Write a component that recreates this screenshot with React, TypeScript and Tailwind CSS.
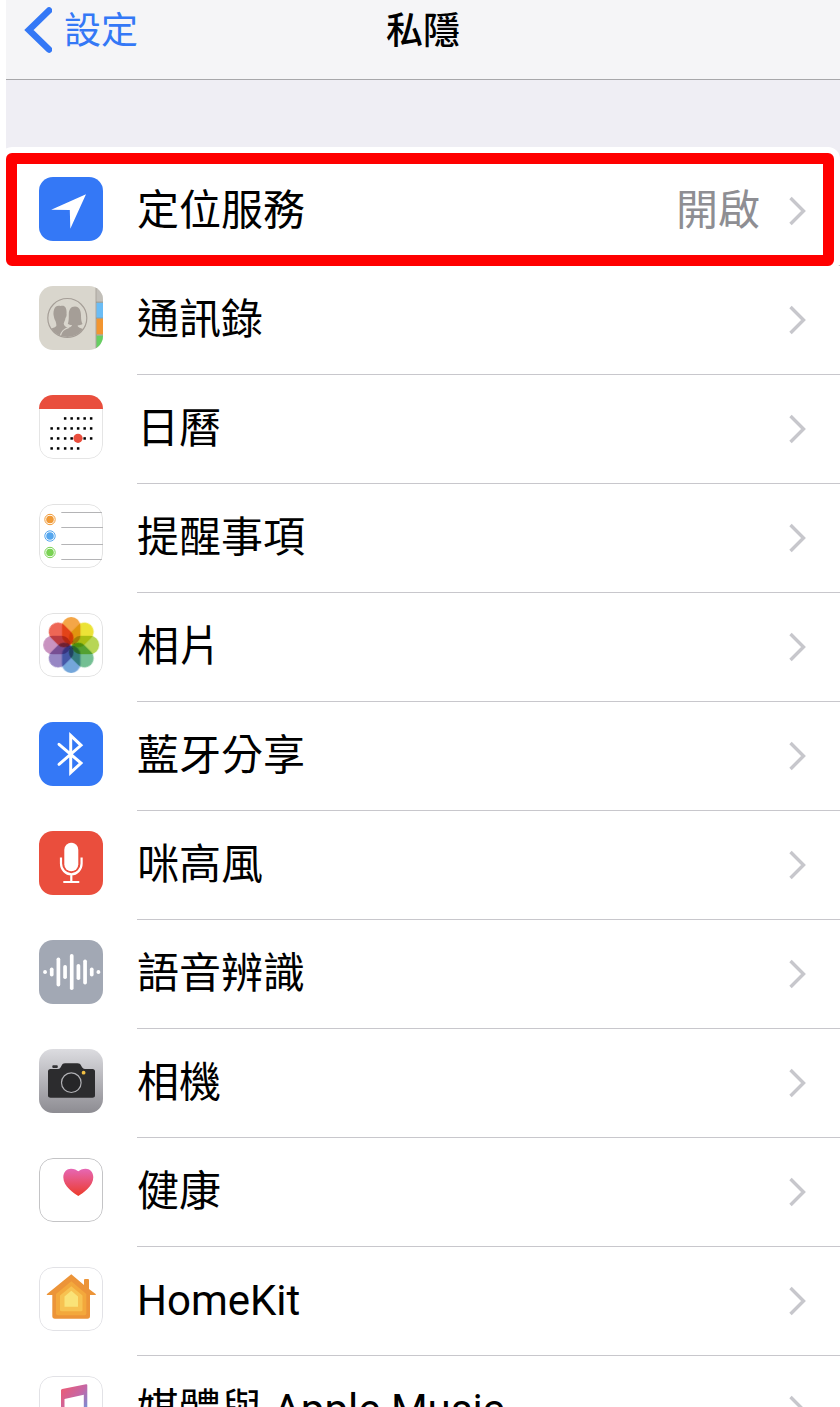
import type { ReactNode } from 'react';

interface PrivacyItem {
  id: string;
  label: string;
  value?: string;
  icon: ReactNode;
  highlighted?: boolean;
}

const petals = ['#f4a647', '#ece336', '#b7d655', '#74bf93', '#74a6da', '#9787c4', '#c993c0', '#ee6655'];

const calendarDots = [
  { y: 23, xs: [26, 32.5, 39, 45.5, 52] },
  { y: 33, xs: [12.5, 19, 26, 32.5, 39, 45.5, 52] },
  { y: 43, xs: [12.5, 19, 26, 32.5, 45.5, 52] },
  { y: 53, xs: [12.5, 19, 26, 32.5, 39] },
];

const reminders = [
  { y: 15.5, color: '#f09a37' },
  { y: 32, color: '#55a6ee' },
  { y: 48.5, color: '#7ad254' },
];

const waveBars = [2, 4.5, 14.5, 7, 18, 8, 12.5, 4.5, 2];

function IconTile({ children, outline }: { children: ReactNode; outline?: string }) {
  return (
    <svg viewBox="0 0 64 64" className="mb-1.5 size-16 shrink-0 overflow-hidden rounded-[14px]" aria-hidden="true">
      <rect width="64" height="64" fill="#fff" />
      {outline && <rect x="0.5" y="0.5" width="63" height="63" rx="13.5" fill="none" stroke={outline} />}
      {children}
    </svg>
  );
}

const items: PrivacyItem[] = [
  {
    id: 'location',
    label: '定位服務',
    value: '開啟',
    highlighted: true,
    icon: (
      <IconTile>
        <rect width="64" height="64" fill="#3478f6" />
        <path d="M47 17.3 12.2 32.7 30.8 33 31.3 51.8Z" fill="#fff" />
      </IconTile>
    ),
  },
  {
    id: 'contacts',
    label: '通訊錄',
    icon: (
      <IconTile>
        <rect width="64" height="64" fill="#d9d6cd" />
        <rect x="57" width="7" height="16" fill="#c2bfb9" />
        <rect x="57" y="16.5" width="7" height="15.5" fill="#6abcf5" />
        <rect x="57" y="32.5" width="7" height="16" fill="#f29530" />
        <rect x="57" y="49.5" width="7" height="15" fill="#66cf62" />
        <path d="M57 0V64" stroke="#aaa69e" strokeWidth="1" />
        <path d="M57 16.2H64M57 32.2H64M57 49H64" stroke="#8c8a80" strokeWidth="0.8" />
        <clipPath id="contacts-circle">
          <circle cx="28.3" cy="32" r="19" />
        </clipPath>
        <g clipPath="url(#contacts-circle)">
          <path d="M36 20.5C40.500 20.500 42 25 42 29.500 42 34 42.500 36 43.500 38 41.500 39.300 38.500 39.300 38.500 39.800 38.500 41 41 42 44 43 47 44 49 46 49 52H20C20 45 23 43.500 27 42.500 31 41.500 33 40.500 33 39 31 39 30 38.500 28.800 38 29.800 35 29.800 32 29.800 28.500 29.800 24 31.500 20.500 36 20.500Z" fill="#a59e97" />
          <path d="M21.500 20C26 18.500 28 22 27.500 27.500 27.800 28.500 27.500 31 26.500 32 26 35 25 36 24.700 37.500 24.700 40 27 41 29 42 24 43.500 21.500 46 21 52H6V45C9 43 15.500 42.500 17.300 40 17.500 38 17 36.500 16.500 35 15.500 33 15 32 14.800 30 14 28 14.500 22 17 20.500 18.500 19.500 20 19.500 21.500 20Z" fill="#a59e97" />
          <path d="M30 41.500C24 43 21.500 46 21 52" fill="none" stroke="#d9d6cd" strokeWidth="1.2" />
        </g>
        <circle cx="28.3" cy="32" r="19.5" fill="none" stroke="#a59e97" strokeWidth="1.2" />
      </IconTile>
    ),
  },
  {
    id: 'calendar',
    label: '日曆',
    icon: (
      <IconTile outline="#e5e5e5">
        {calendarDots.map((row) =>
          row.xs.map((x) => <rect key={`${x}-${row.y}`} x={x - 1.1} y={row.y - 0.8} width="2.5" height="2.5" fill="#000" />)
        )}
        <circle cx="39" cy="43.3" r="4.6" fill="#e94e3d" />
        <rect width="64" height="14" fill="#e94e3d" />
      </IconTile>
    ),
  },
  {
    id: 'reminders',
    label: '提醒事項',
    icon: (
      <IconTile outline="#e2e2e2">
        {reminders.map((dot) => (
          <g key={dot.color}>
            <circle cx="11" cy={dot.y} r="5.2" fill="none" stroke={dot.color} strokeWidth="1" />
            <circle cx="11" cy={dot.y} r="3.8" fill={dot.color} />
          </g>
        ))}
        <path d="M22.300 8.500H63M22.300 23.500H64M22.300 40.500H64M22.300 55.500H63" stroke="#b4b4b6" strokeWidth="1" />
      </IconTile>
    ),
  },
  {
    id: 'photos',
    label: '相片',
    icon: (
      <IconTile outline="#e2e2e2">
        <g transform="translate(32.2 32)">
          {petals.map((color, i) => (
            <rect
              key={color}
              x="-9.200"
              y="-28"
              width="18.400"
              height="27.500"
              rx="9"
              fill={color}
              transform={`rotate(${i * 45})`}
              className="mix-blend-multiply"
            />
          ))}
        </g>
      </IconTile>
    ),
  },
  {
    id: 'bluetooth',
    label: '藍牙分享',
    icon: (
      <IconTile>
        <rect width="64" height="64" fill="#3478f6" />
        <path d="M20 22.300 42 41 31.700 50.500V13.500L42 23.300 20 42.300" fill="none" stroke="#fff" strokeWidth="3" strokeLinecap="round" />
      </IconTile>
    ),
  },
  {
    id: 'microphone',
    label: '咪高風',
    icon: (
      <IconTile>
        <rect width="64" height="64" fill="#ea4e3d" />
        <rect x="25.3" y="11.8" width="14" height="28.500" rx="7" fill="#fff" />
        <path d="M22 26.500V32.500A10.300 10.800 0 0 0 42.600 32.500V26.500M32.300 43.500V51M24.300 51H40.300" fill="none" stroke="#fff" strokeWidth="2.2" />
      </IconTile>
    ),
  },
  {
    id: 'speech',
    label: '語音辨識',
    icon: (
      <IconTile>
        <rect width="64" height="64" fill="#a2a8b4" />
        {waveBars.map((half, i) => (
          <rect key={i} x={4.2 + i * 6.67} y={32 - half} width="3.7" height={half * 2} rx="1.8" fill="#fff" />
        ))}
      </IconTile>
    ),
  },
  {
    id: 'camera',
    label: '相機',
    icon: (
      <IconTile>
        <linearGradient id="camera-bg" x1="0" y1="0" x2="0" y2="1">
          <stop offset="0" stopColor="#dcdce0" />
          <stop offset="1" stopColor="#8d8c92" />
        </linearGradient>
        <rect width="64" height="64" fill="url(#camera-bg)" />
        <rect x="13.300" y="16.300" width="5.500" height="2.600" rx="1" fill="#333336" />
        <path d="M11.500 20H19C21 20 21.500 18.500 22.500 16.800 23.500 15 24.200 14.300 26 14.300H38.500C40.500 14.300 41.200 15 42.200 16.800 43.200 18.500 44 20 46 20H53.500A2.500 2.500 0 0 1 56 22.500V46A2.500 2.500 0 0 1 53.500 48.700H11.500A2.500 2.500 0 0 1 9 46V22.500A2.500 2.500 0 0 1 11.500 20Z" fill="#2c2c2e" />
        <circle cx="32.300" cy="33.700" r="9.800" fill="#262628" stroke="#b0b0b4" strokeWidth="1.200" />
        <circle cx="44.600" cy="23.700" r="1.900" fill="#f2c044" />
      </IconTile>
    ),
  },
  {
    id: 'health',
    label: '健康',
    icon: (
      <IconTile outline="#c4c4c6">
        <linearGradient id="health-heart" x1="0" y1="0" x2="0" y2="1">
          <stop offset="0" stopColor="#e667b5" />
          <stop offset="1" stopColor="#ec3b2b" />
        </linearGradient>
        <path d="M39.300 38C35 35.500 24.300 28.500 24.300 19.300 24.300 14 27.800 10.700 32 10.700 35.200 10.700 37.800 12 39.300 13.300 40.800 12 43.400 10.700 46.600 10.700 50.800 10.700 54.300 14 54.300 19.300 54.300 28.500 43.600 35.500 39.300 38Z" fill="url(#health-heart)" />
      </IconTile>
    ),
  },
  {
    id: 'homekit',
    label: 'HomeKit',
    icon: (
      <IconTile outline="#e2e2e6">
        <path d="M32.300 7.300 45 18V13Q45 12 46 12H49Q50 12 50 13V22L57 27.200 56.500 28H51V49Q51 51.700 48.500 51.700H16Q13.300 51.700 13.300 49V28H8L7.700 27.200Z" fill="#ec9438" />
        <path d="M32.300 14.300 47.300 27V46.500Q47.300 48.300 45.500 48.300H19Q17 48.300 17 46.500V27Z" fill="#f3a83c" />
        <path d="M32.300 19.300 43.500 28.500V43Q43.500 44.300 42 44.300H22.500Q21 44.300 21 43V28.500Z" fill="#f7c251" />
        <path d="M32.300 23.700 39 29.500V39.700H25.500V29.500Z" fill="#fae378" />
      </IconTile>
    ),
  },
  {
    id: 'media',
    label: '媒體與 Apple Music',
    icon: (
      <IconTile outline="#e2e2e6">
        <linearGradient id="music-note" x1="0" y1="0" x2="1" y2="1">
          <stop offset="0.15" stopColor="#ee5b72" />
          <stop offset="0.5" stopColor="#c566a5" />
          <stop offset="0.85" stopColor="#5d9be6" />
        </linearGradient>
        <path d="M22 14.300Q22 13.200 23.200 12.900L47 8.300Q48.300 8.100 48.300 9.300V42A6 5 0 1 1 44.800 37.500V18.800L25.500 23V48A6 5 0 1 1 22 43Z" fill="url(#music-note)" />
      </IconTile>
    ),
  },
];

function Chevron() {
  return (
    <svg viewBox="0 0 18 30" className="h-[30px] w-[18px] shrink-0" aria-hidden="true">
      <path d="M2.500 2 15.500 15 2.500 28" fill="none" stroke="#c7c7cc" strokeWidth="3.4" />
    </svg>
  );
}

function PrivacyRow({ item }: { item: PrivacyItem }) {
  return (
    <li className="relative">
      <a href={`#${item.id}`} className="flex items-center gap-[34px] pl-[33px]">
        {item.icon}
        <div className="flex h-[109px] min-w-0 flex-1 items-center border-b border-[#c8c7cc] pr-[34px]">
          <span className="flex-1 truncate text-[42px] leading-[60px] text-black">{item.label}</span>
          {item.value && <span className="mr-7 text-[42px] leading-[60px] text-[#8e8e93]">{item.value}</span>}
          <Chevron />
        </div>
      </a>

      {/* Red call-out frame */}
      {item.highlighted && (
        <div className="pointer-events-none absolute -top-1 right-1.5 bottom-0 left-0 rounded-md border-[11px] border-[#ff0000] ring-6 ring-white" />
      )}
    </li>
  );
}

export default function App() {
  return (
    <div className="flex h-dvh flex-col overflow-hidden bg-white pl-1.5 font-['Roboto','Noto_Sans_CJK_TC',sans-serif]">
      {/* Navigation bar */}
      <header className="grid h-20 shrink-0 grid-cols-[1fr_auto_1fr] items-center border-b border-[#a7a7aa] bg-[#f5f5f7] pb-5">
        <a href="#settings" className="flex items-center gap-3 pl-[18px] text-[#3478f6]">
          <svg viewBox="0 0 28 48" className="h-12 w-7" aria-hidden="true">
            <path d="M25 4.500 5 24 25 43.500" fill="none" stroke="currentColor" strokeWidth="6.6" strokeLinecap="round" />
          </svg>
          <span className="pt-1 text-[37px] leading-[52px]">設定</span>
        </a>
        <h1 className="pt-1 text-[37px] leading-[52px] font-medium text-black">私隱</h1>
      </header>

      {/* Privacy list */}
      <main className="min-h-0 flex-1 overflow-y-auto bg-[#efeef4] pt-[77px] [scrollbar-width:none]">
        <ul className="bg-white">
          {items.map((item) => (
            <PrivacyRow key={item.id} item={item} />
          ))}
        </ul>
      </main>
    </div>
  );
}
